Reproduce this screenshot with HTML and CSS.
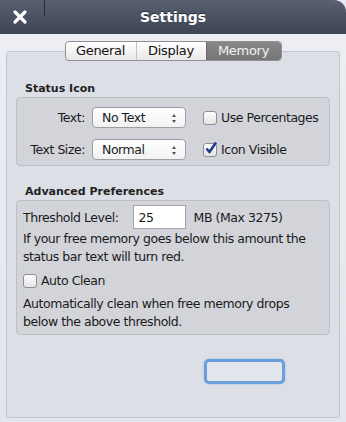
FILE: index.html
```html
<!DOCTYPE html>
<html lang="en">
<head>
	<meta charset="UTF-8">
	<title>Settings</title>
	<link rel="stylesheet" href="styles.css">
</head>
<body>
	<div id="window">
		<div id="titlebar">
			<span class="close">
				<svg width="16" height="16" viewBox="0 0 16 16"><path d="M3 3L13 13M13 3L3 13" stroke="#fff" stroke-width="3.2" stroke-linecap="round"/></svg>
			</span>
			<span class="divider"></span>
			<span class="title">Settings</span>
		</div>
		<div id="frame">
			<div class="tabs">
				<span class="tab">General</span>
				<span class="tab">Display</span>
				<span class="tab selected">Memory</span>
			</div>
			<div class="panel">
				<div class="caption">Status Icon</div>
				<div class="group status">
					<span class="label">Text:</span>
					<span class="popup">No Text <i class="arrows"></i></span>
					<label class="check"><span class="box"></span>Use Percentages</label>

					<span class="label">Text Size:</span>
					<span class="popup">Normal <i class="arrows"></i></span>
					<label class="check"><span class="box on">
						<svg width="14" height="14" viewBox="0 0 14 14"><path d="M2.5 7.5L5.5 11L12 1.5" stroke="#1b3f8c" stroke-width="2.6" fill="none" stroke-linejoin="round"/></svg>
					</span>Icon Visible</label>
				</div>

				<div class="caption">Advanced Preferences</div>
				<div class="group advanced">
					<div class="threshold">
						<span>Threshold Level:</span>
						<span class="field">25</span>
						<span>MB (Max 3275)</span>
					</div>
					<p>If your free memory goes below this amount the<br>status bar text will turn red.</p>
					<label class="check auto"><span class="box"></span>Auto Clean</label>
					<p>Automatically clean when free memory drops<br>below the above threshold.</p>
				</div>

				<div class="buttons">
					<span class="button"></span>
				</div>
			</div>
		</div>
	</div>
</body>
</html>
```

FILE: styles.css
```css
* {
	margin: 0;
	padding: 0;
	box-sizing: border-box;
}

body {
	width: 346px;
	height: 422px;
	overflow: hidden;
	background: #e6e9ef;
	font-family: "DejaVu Sans", sans-serif;
	font-size: 12.5px;
	letter-spacing: -0.45px;
	color: #1a1a1a;
}

#window {
	width: 346px;
	height: 422px;
	display: flex;
	flex-direction: column;
}

#titlebar {
	height: 34px;
	flex: none;
	display: flex;
	align-items: center;
	position: relative;
	background: linear-gradient(#59616f, #3d4454);
	border-top-right-radius: 12px;
	color: #fff;
}

#titlebar .close {
	width: 44px;
	display: flex;
	justify-content: center;
	padding-right: 4px;
}

#titlebar .divider {
	position: absolute;
	left: 44px;
	top: 0;
	width: 1px;
	height: 16px;
	background: #262b35;
}

#titlebar .title {
	position: absolute;
	left: 0;
	right: 0;
	text-align: center;
	font-weight: bold;
	font-size: 14px;
	letter-spacing: 0;
	text-shadow: 0 -1px 0 #2a2f3a;
}

#frame {
	flex: 1;
	display: flex;
	flex-direction: column;
	padding: 7px 6px 4px 6px;
	background: linear-gradient(#eceef3, #e2e5eb);
}

.tabs {
	align-self: center;
	display: flex;
	height: 20px;
	border: 1px solid #8e9096;
	border-radius: 4px;
	background: linear-gradient(#ffffff, #e9e9e9);
	overflow: hidden;
	position: relative;
	z-index: 1;
}

.tab {
	display: flex;
	align-items: center;
	justify-content: center;
	font-size: 13px;
	letter-spacing: -0.3px;
	line-height: 18px;
	border-left: 1px solid #c4c4c4;
	color: #111;
}

.tab:nth-child(1) {
	width: 70px;
	border-left: none;
}

.tab:nth-child(2) {
	width: 70px;
}

.tab.selected {
	width: 75px;
	border-left: 1px solid #6c6c6c;
	background: linear-gradient(#888, #767676);
	color: #f2f2f2;
}

.panel {
	flex: 1;
	margin-top: -10px;
	border: 1px solid #c3c6cc;
	border-radius: 3px;
	background: #dcdfe6;
	padding: 30px 9px 0 9px;
	display: flex;
	flex-direction: column;
}

.caption {
	font-size: 11px;
	font-weight: bold;
	letter-spacing: 0;
	color: #222;
	padding-left: 9px;
	height: 14px;
	line-height: 14px;
	margin-bottom: 1px;
}

.group {
	border: 1px solid #bcbfc5;
	border-radius: 4px;
	background: #d2d4da;
}

.status {
	display: grid;
	grid-template-columns: 62px 94px auto;
	column-gap: 7px;
	row-gap: 11px;
	align-items: center;
	padding: 9px 0 5px 6px;
	margin-bottom: 19px;
}

.label {
	text-align: right;
	line-height: 18px;
}

.popup {
	height: 21px;
	display: flex;
	align-items: center;
	padding-left: 9px;
	border: 1px solid #9c9ea3;
	border-radius: 4px;
	background: linear-gradient(#ffffff, #f2f2f2);
	line-height: 18px;
	position: relative;
}

.arrows {
	position: absolute;
	right: 8px;
	top: 6px;
	width: 5px;
	height: 9px;
	border-top: 3px solid transparent;
	border-bottom: 3px solid transparent;
}

.arrows:before, .arrows:after {
	content: "";
	position: absolute;
	left: 0;
	border-left: 2.5px solid transparent;
	border-right: 2.5px solid transparent;
}

.arrows:before {
	top: -3px;
	border-bottom: 3px solid #555;
}

.arrows:after {
	bottom: -3px;
	border-top: 3px solid #555;
}

.check {
	display: flex;
	align-items: center;
	line-height: 18px;
	margin-left: 10px;
}

.box {
	width: 14px;
	height: 14px;
	border: 1px solid #8d8f94;
	border-radius: 3px;
	background: linear-gradient(#fdfdfd, #e4e4e4);
	margin-right: 4px;
	position: relative;
}

.box.on svg {
	position: absolute;
	left: 0;
	top: -3px;
}

.advanced {
	padding: 4px 0 3px 6px;
}

.threshold {
	display: flex;
	align-items: center;
	height: 24px;
}

.field {
	width: 53px;
	height: 24px;
	margin: 0 8px 0 14px;
	background: #fff;
	border: 1px solid #a3a5aa;
	display: flex;
	align-items: center;
	padding-left: 5px;
}

.advanced p {
	line-height: 18px;
	margin-top: 1px;
}

.check.auto {
	margin: 8px 0 0 0;
	height: 14px;
}

.check.auto + p {
	margin-top: 7px;
}

.buttons {
	display: flex;
	justify-content: flex-end;
	padding: 24px 45px 0 0;
}

.button {
	width: 81px;
	height: 25px;
	border: 3px solid #6b9fd9;
	border-radius: 5px;
	background: #e2e5eb;
	box-shadow: 0 0 2px #8bb4e4;
}
```
